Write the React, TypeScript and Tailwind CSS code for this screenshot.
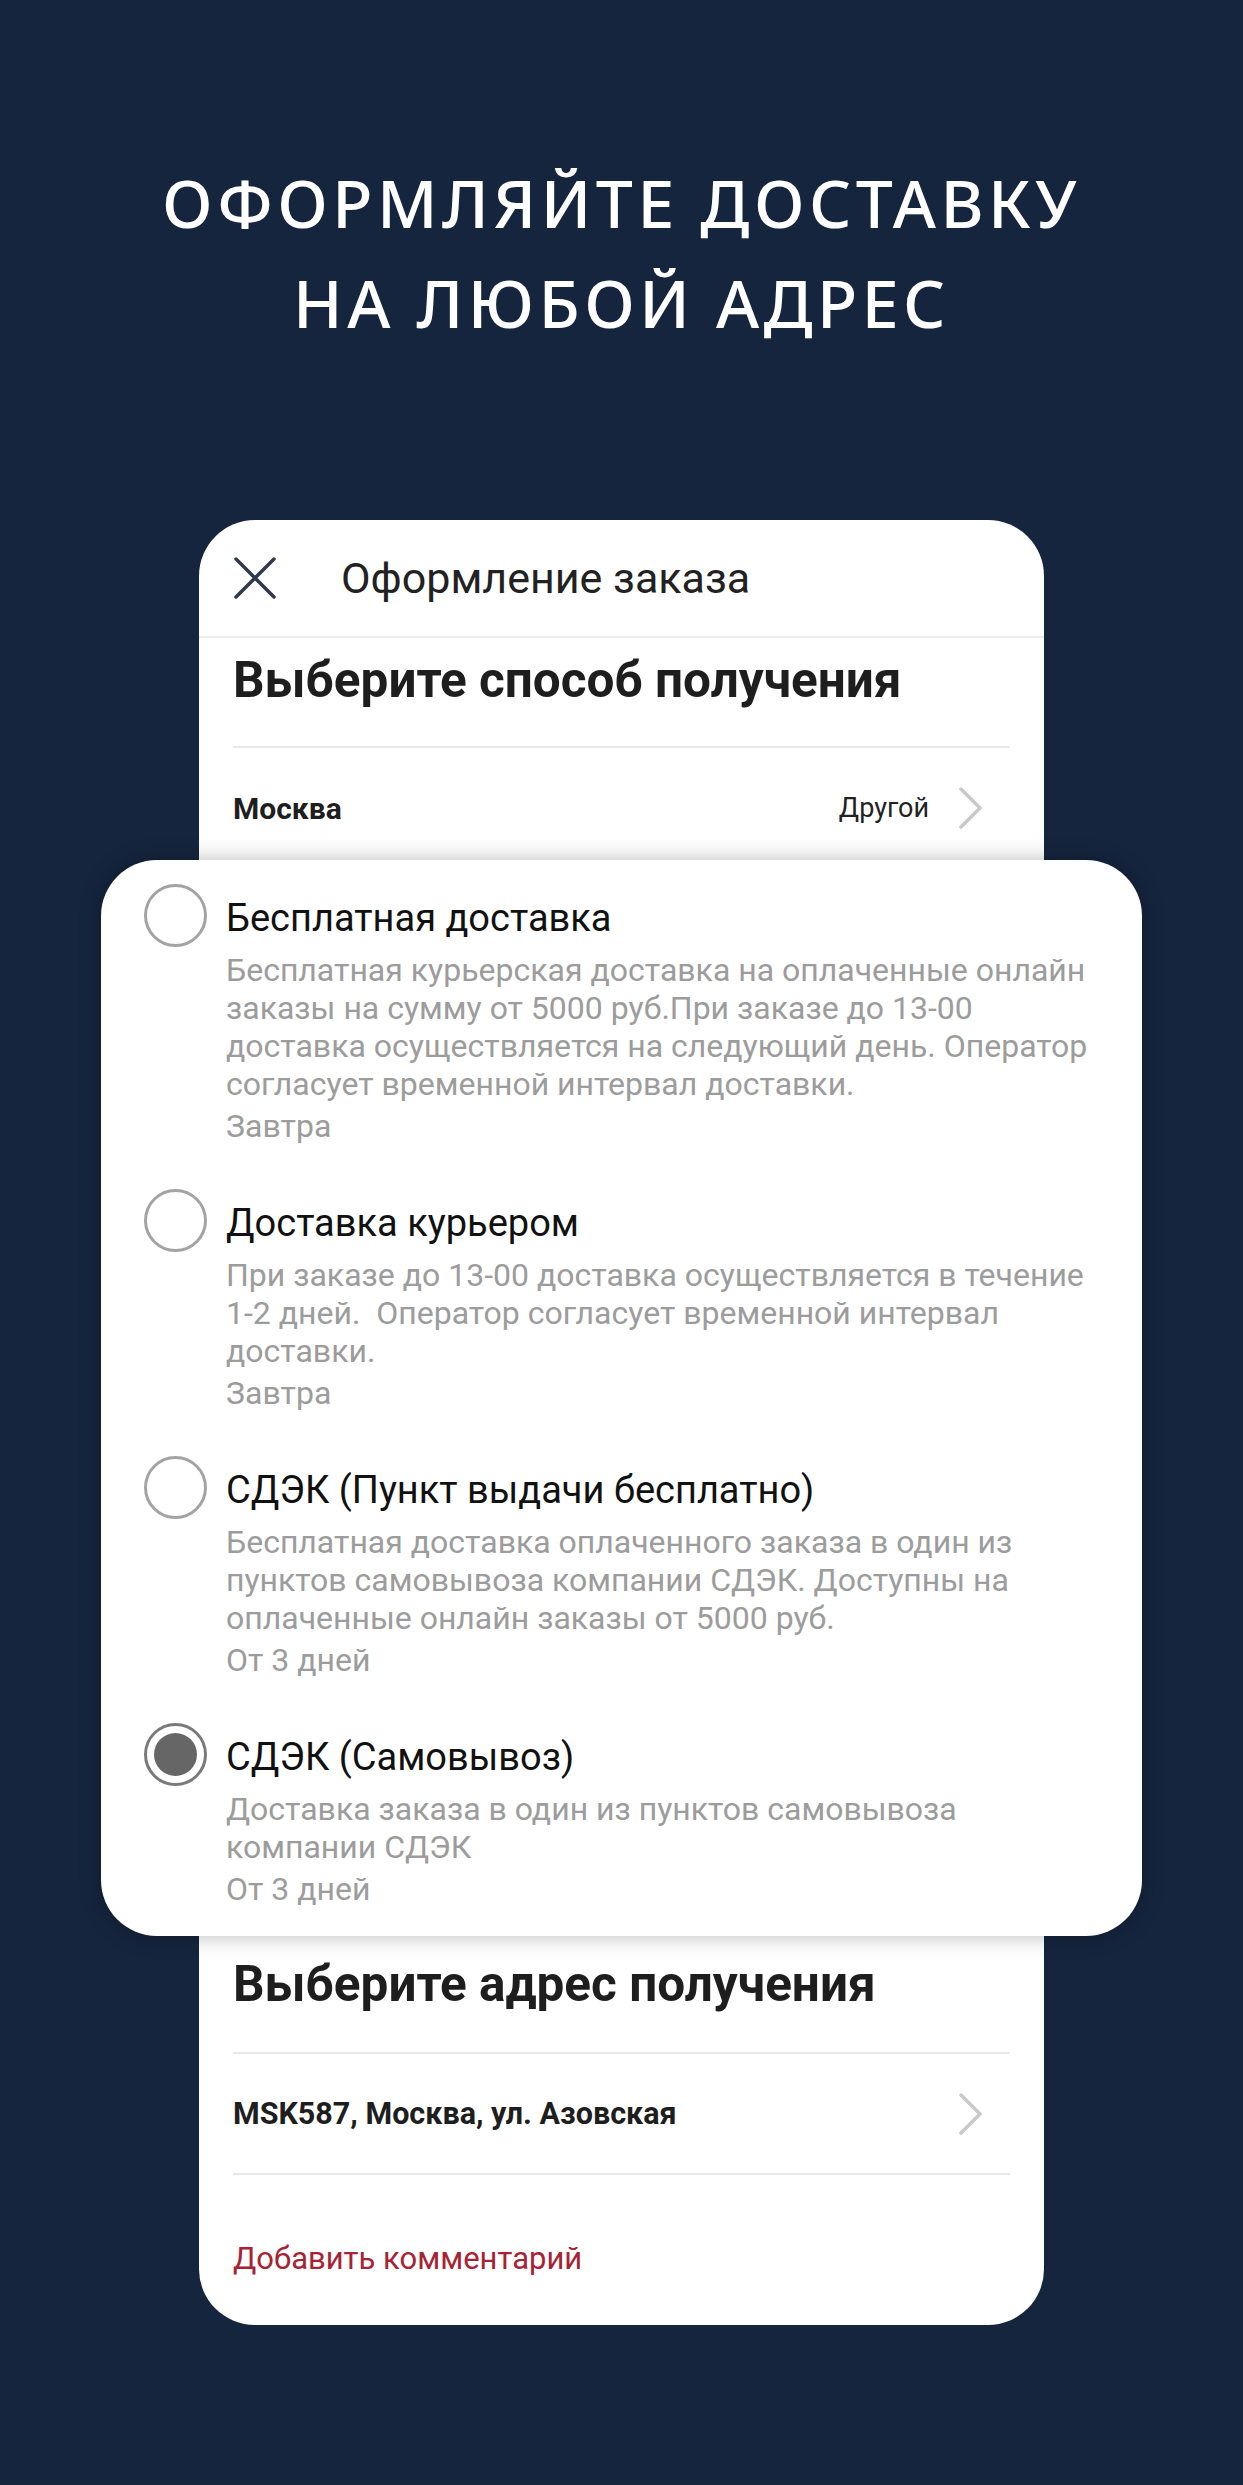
const options = [
  {
    title: "Бесплатная доставка",
    lines: [
      "Бесплатная курьерская доставка на оплаченные онлайн",
      "заказы на сумму от 5000 руб.При заказе до 13-00",
      "доставка осуществляется на следующий день. Оператор",
      "согласует временной интервал доставки.",
    ],
    when: "Завтра",
    checked: false,
  },
  {
    title: "Доставка курьером",
    lines: [
      "При заказе до 13-00 доставка осуществляется в течение",
      "1-2 дней.  Оператор согласует временной интервал",
      "доставки.",
    ],
    when: "Завтра",
    checked: false,
  },
  {
    title: "СДЭК (Пункт выдачи бесплатно)",
    lines: [
      "Бесплатная доставка оплаченного заказа в один из",
      "пунктов самовывоза компании СДЭК. Доступны на",
      "оплаченные онлайн заказы от 5000 руб.",
    ],
    when: "От 3 дней",
    checked: false,
  },
  {
    title: "СДЭК (Самовывоз)",
    lines: ["Доставка заказа в один из пунктов самовывоза", "компании СДЭК"],
    when: "От 3 дней",
    checked: true,
  },
];

function Radio({ checked }: { checked: boolean }) {
  if (checked) {
    return (
      <div className="w-[63px] h-[63px] shrink-0 rounded-full border-[3px] border-[#7a7a7a] flex items-center justify-center">
        <div className="w-[43px] h-[43px] rounded-full bg-[#666666]" />
      </div>
    );
  }
  return <div className="w-[63px] h-[63px] shrink-0 rounded-full border-[3px] border-[#a3a3a3]" />;
}

function Chevron() {
  return (
    <svg width="24" height="42" viewBox="0 0 24 42" fill="none">
      <path d="M2 2 L21 21 L2 40" stroke="#c9c9c9" strokeWidth="3.5" strokeLinecap="round" strokeLinejoin="round" />
    </svg>
  );
}

export default function App() {
  return (
    <div className="min-h-[2485px] bg-[#15253e] pt-[152px] pb-[162px]">
      <h1 className="font-['Noto_Sans',sans-serif] font-medium text-white text-[66px] leading-[100px] text-center uppercase tracking-[4.5px]">
        Оформляйте доставку
        <br />
        на любой адрес
      </h1>

      <div className="mt-[168px] mx-auto w-[845px] bg-white rounded-[56px] font-['Roboto',sans-serif] text-[#1e1e1e]">
        {/* header */}
        <div className="h-[118px] flex items-center px-[34px] border-b-[2px] border-[#ececec]">
          <svg width="44" height="44" viewBox="0 0 44 44" fill="none">
            <path d="M3 3 L41 41 M41 3 L3 41" stroke="#2f3b4c" strokeWidth="3.5" strokeLinecap="round" />
          </svg>
          <span className="ml-[64px] text-[43px] text-[#222]">Оформление заказа</span>
        </div>

        <div className="px-[34px]">
          <h2 className="mt-[14px] text-[49.5px] leading-[56px] font-bold">Выберите способ получения</h2>
          <div className="mt-[38px] h-[2px] bg-[#e8e8e8]" />
          <div className="h-[112px] pt-[8px] flex items-center justify-between">
            <span className="text-[30px] font-bold">Москва</span>
            <div className="flex items-center pr-[27px]">
              <span className="text-[27px] text-[#222]">Другой</span>
              <span className="ml-[30px] flex">
                <Chevron />
              </span>
            </div>
          </div>
        </div>

        {/* options card */}
        <div className="-mx-[98px] bg-white rounded-[56px] shadow-[0_0_22px_rgba(0,0,0,0.28)] pl-[43px] pt-[34px] pb-[28px] flex flex-col gap-[54px]">
          {options.map((o) => (
            <div key={o.title} className="flex">
              <div className="w-[63px] h-[42px] flex items-center shrink-0">
                <Radio checked={o.checked} />
              </div>
              <div className="ml-[19px]">
                <div className="text-[38px] leading-[48px] text-[#111]">{o.title}</div>
                <div className="mt-[9px] text-[32px] leading-[38px] text-[#9c9c9c]">
                  {o.lines.map((l) => (
                    <div key={l} className="whitespace-pre">
                      {l}
                    </div>
                  ))}
                </div>
                <div className="mt-[4px] text-[32px] leading-[38px] text-[#9c9c9c]">{o.when}</div>
              </div>
            </div>
          ))}
        </div>

        <div className="px-[34px] pb-[46px]">
          <h2 className="mt-[20px] text-[49.5px] leading-[56px] font-bold">Выберите адрес получения</h2>
          <div className="mt-[40px] h-[2px] bg-[#e8e8e8]" />
          <div className="h-[119px] flex items-center justify-between pr-[27px]">
            <span className="text-[30.5px] font-bold">MSK587, Москва, ул. Азовская</span>
            <Chevron />
          </div>
          <div className="h-[2px] bg-[#e8e8e8]" />
          <div className="mt-[64px] text-[31px] leading-[40px] text-[#a82233]">Добавить комментарий</div>
        </div>
      </div>
    </div>
  );
}
